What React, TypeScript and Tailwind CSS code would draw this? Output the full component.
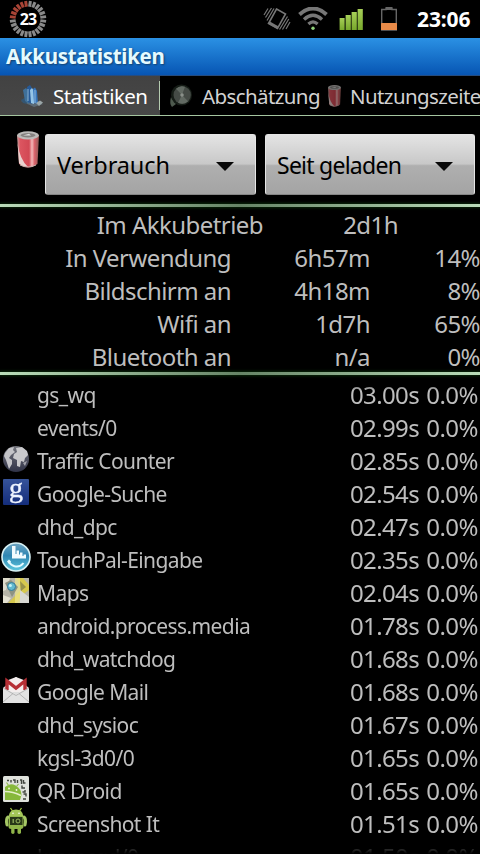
import clsx from 'clsx';

type IconName = 'globe' | 'search' | 'touchpal' | 'maps' | 'mail' | 'qr' | 'droid';

interface Process {
  name: string;
  time: string;
  icon?: IconName;
}

const SUMMARY = [
  { label: 'In Verwendung', value: '6h57m', share: '14%' },
  { label: 'Bildschirm an', value: '4h18m', share: '8%' },
  { label: 'Wifi an', value: '1d7h', share: '65%' },
  { label: 'Bluetooth an', value: 'n/a', share: '0%' },
];

const PROCESSES: Process[] = [
  { name: 'gs_wq', time: '03.00s' },
  { name: 'events/0', time: '02.99s' },
  { name: 'Traffic Counter', time: '02.85s', icon: 'globe' },
  { name: 'Google-Suche', time: '02.54s', icon: 'search' },
  { name: 'dhd_dpc', time: '02.47s' },
  { name: 'TouchPal-Eingabe', time: '02.35s', icon: 'touchpal' },
  { name: 'Maps', time: '02.04s', icon: 'maps' },
  { name: 'android.process.media', time: '01.78s' },
  { name: 'dhd_watchdog', time: '01.68s' },
  { name: 'Google Mail', time: '01.68s', icon: 'mail' },
  { name: 'dhd_sysioc', time: '01.67s' },
  { name: 'kgsl-3d0/0', time: '01.65s' },
  { name: 'QR Droid', time: '01.65s', icon: 'qr' },
  { name: 'Screenshot It', time: '01.51s', icon: 'droid' },
  { name: 'kmmcqd/0', time: '01.50s' },
];

function BatteryRing() {
  const ticks = Array.from({ length: 24 }, (_, i) => i);
  return (
    <div className="relative h-[38px] w-[38px]">
      <svg viewBox="0 0 38 38" className="h-[38px] w-[38px]">
        {ticks.map((i) => (
          <rect
            key={i}
            x="17.5"
            y="0.8"
            width="3"
            height="5.8"
            fill={i > 17 ? '#a84436' : '#8a8a8a'}
            transform={`rotate(${i * 15 + 7.5} 19 19)`}
          />
        ))}
      </svg>
      <span className="absolute inset-0 flex items-center justify-center text-[16px] font-bold tracking-[-0.8px] text-white">
        23
      </span>
    </div>
  );
}

function StatusBar() {
  return (
    <div className="flex h-[38px] shrink-0 items-center bg-black pl-[9px] pr-[9px]">
      <BatteryRing />
      <div className="ml-auto flex h-full items-start">
        {/* vibrate */}
        <svg viewBox="0 0 28 24" className="mt-[7px] h-6 w-7" fill="none" stroke="#777" strokeWidth="1.6">
          <path d="M13.5 2 22.5 7 14.5 21.5 5.5 16.5Z" />
          <path d="M5.8 15.5 14.6 20.5" strokeWidth="2.6" />
          <path d="M8.5 1 2.5 10.5M5 1.5 1 8M11 1.5 4 13.5M19.5 22.5 25.8 12M23 22 27 15M16.5 22.5 24.5 9.5" strokeWidth="1.2" />
        </svg>
        {/* wifi */}
        <svg viewBox="0 0 30 24" className="ml-[7px] mt-[7px] h-6 w-[30px]" fill="none" stroke="#777">
          <path d="M1.5 7.4Q15-4.4 28.5 7.4" strokeWidth="4" />
          <path d="M6 12.4Q15 4.2 24 12.4" strokeWidth="3.4" />
          <path d="M10.4 17Q15 12.8 19.6 17" strokeWidth="3.2" />
          <circle cx="15" cy="21.3" r="1.7" fill="#8fd07a" stroke="none" />
        </svg>
        {/* signal */}
        <svg viewBox="0 0 24 24" className="ml-[11px] mt-[7px] h-6 w-6">
          <defs>
            <linearGradient id="signal" x1="0" y1="0" x2="0" y2="1">
              <stop offset="0" stopColor="#a6cf57" />
              <stop offset="1" stopColor="#78a82c" />
            </linearGradient>
          </defs>
          <g fill="url(#signal)">
            <rect x="0.6" y="11" width="5" height="12" />
            <rect x="6.6" y="8" width="5.2" height="15" />
            <rect x="12.6" y="5" width="5.2" height="18" />
            <rect x="18.6" y="2" width="5.2" height="21" />
          </g>
        </svg>
        {/* battery */}
        <svg viewBox="0 0 18 26" className="ml-[17px] mt-[6px] h-[26px] w-[18px]">
          <path d="M6 2h6v1.5h4.3V24H1.7V3.5H6Z" fill="none" stroke="#666" strokeWidth="1.4" />
          <rect x="6" y="1" width="6" height="3" fill="#666" />
          <rect x="1" y="17" width="16" height="7" rx="0.6" fill="#e88a48" />
        </svg>
        <span className="ml-[19px] w-[54px] whitespace-nowrap text-[21px] font-bold leading-[39px] tracking-[-0.1px] text-white">
          23:06
        </span>
      </div>
    </div>
  );
}

function ChartIcon() {
  return (
    <svg viewBox="0 0 24 24" className="h-6 w-6 shrink-0">
      <path d="M1 17 11 14 23 20 14 23Z" fill="#5d6a74" />
      <path d="M1 16 6 13 7 20 3 19Z" fill="#345571" />
      <path d="M3 6 6 4 9 8V20L5 17Z" fill="#3f709a" />
      <path d="M7 3 10 1 12 4V20L8 18Z" fill="#265a98" />
      <path d="M10 6 12 4 14 7V20L11 19Z" fill="#95c5e7" />
      <path d="M13 5 15 3.5 17 7 18 20 14 19Z" fill="#3676bd" />
      <path d="M8 5V17M15 6V19" stroke="#a8cce2" strokeWidth="0.8" />
      <path d="M16 19 20 16.5 23 18.5 19 22Z" fill="#9ba6a8" />
    </svg>
  );
}

function DiscIcon() {
  return (
    <svg viewBox="0 0 24 24" className="h-6 w-6 shrink-0">
      <path d="M2 13Q0 20 3 23L7 20Z" fill="#4d594d" />
      <circle cx="12.5" cy="11" r="10.5" fill="#161d17" />
      <circle cx="13.2" cy="11" r="8.7" fill="#454b46" />
      <path d="M13 11 7 4.7A8.7 8.7 0 0 1 16 2.8ZM13 11 19 17.2A8.7 8.7 0 0 1 9 18.7Z" fill="#626a63" />
      <circle cx="13" cy="11" r="1.8" fill="#8a908a" />
    </svg>
  );
}

function CanIcon({ className }: { className: string }) {
  return (
    <svg viewBox="0 0 22 37" preserveAspectRatio="none" className={clsx('shrink-0', className)}>
      <defs>
        <linearGradient id="can">
          <stop offset="0" stopColor="#c9a5a1" />
          <stop offset="0.15" stopColor="#dc5560" />
          <stop offset="0.55" stopColor="#d24854" />
          <stop offset="0.68" stopColor="#f3b8b8" />
          <stop offset="0.8" stopColor="#d9626a" />
          <stop offset="1" stopColor="#8e5a56" />
        </linearGradient>
      </defs>
      <path d="M0 4Q11-2 22 4L20.5 33Q11 40 2 33Z" fill="url(#can)" />
      <path d="M0.6 12Q2.5 28 11 36L5 35 2 32Z" fill="#e9d2cf" />
      <ellipse cx="11" cy="4.4" rx="10.9" ry="4.2" fill="#bcbbb9" />
      <ellipse cx="11" cy="4.2" rx="7.5" ry="2.2" fill="#858280" />
      <path d="M6 4.6 12 2.8 14 4.6Z" fill="#ddd" />
      <path d="M3 34Q11 38 19 34" fill="none" stroke="#c5adaa" />
    </svg>
  );
}

function Tabs() {
  return (
    <div className="flex h-10 shrink-0 overflow-hidden border-b border-[#a5c5a0] bg-black text-[20.5px] leading-[39px] text-[#d2d2d2]">
      <div className="flex w-40 shrink-0 items-center bg-gradient-to-b from-[#424242] to-[#484848] pl-5 text-white">
        <ChartIcon />
        <span className="ml-[9px] whitespace-nowrap pt-[2px] tracking-[-0.55px]">Statistiken</span>
        <div className="ml-auto h-[29px] w-px bg-[#b5cbb0]" />
      </div>
      <div className="flex w-40 shrink-0 items-center pl-[9px]">
        <DiscIcon />
        <span className="ml-[9px] whitespace-nowrap pt-[2px] tracking-[-0.6px]">Abschätzung</span>
      </div>
      <div className="flex w-40 shrink-0 items-center pl-2">
        <CanIcon className="h-[22px] w-[13px] opacity-60" />
        <span className="ml-[9px] whitespace-nowrap pt-[2px] tracking-[-0.6px]">Nutzungszeite</span>
      </div>
    </div>
  );
}

function Spinner({ text, className }: { text: string; className: string }) {
  return (
    <button className="flex h-[61px] items-center rounded-[3px] border border-[#e6e6e6] border-b-[#858585] bg-[linear-gradient(#e4e4e4_0%,#c8c8c8_49%,#afafaf_52%,#a4a4a4_100%)] pl-[11px] pr-[21px] text-black">
      <span className={clsx('whitespace-nowrap pt-[2px]', className)}>{text}</span>
      <svg viewBox="0 0 18 9" className="ml-auto mt-[3px] h-[9px] w-[18px]">
        <path d="M0 0H18L9 9Z" fill="#080808" />
      </svg>
    </button>
  );
}

function Divider() {
  return (
    <div className="relative z-10 h-[3px] shrink-0 bg-[linear-gradient(90deg,#b9dcb8_0%,#668466_50%,#b9dcb8_100%)] shadow-[0_0_3px_1px_#092909]" />
  );
}

function AppIcon({ name }: { name: IconName }) {
  switch (name) {
    case 'globe':
      return (
        <svg viewBox="0 0 26 26" className="h-[26px] w-[26px]">
          <defs>
            <linearGradient id="globe" x1="0" y1="0" x2="0" y2="1">
              <stop offset="0" stopColor="#74757d" />
              <stop offset="1" stopColor="#303348" />
            </linearGradient>
          </defs>
          <circle cx="13" cy="13" r="13" fill="url(#globe)" />
          <path d="M2 7 6 2 11 1 10 4 12 6 8 9 6 12 9 14 9 18 6 23 4 17 3 14 1 10Z" fill="#c3c3c7" />
          <path d="M13 2 19 1 24 5 25 9 22 12 21 16 18 15 17 21 14 20 14 14 10 12 11 8 14 6Z" fill="#c9c9cc" />
          <path d="M20 17 24 15 22 20Z" fill="#a2a2aa" />
        </svg>
      );
    case 'search':
      return (
        <svg viewBox="0 0 26 26" className="h-[26px] w-[26px]">
          <defs>
            <linearGradient id="search" x1="0" y1="0" x2="0" y2="1">
              <stop offset="0" stopColor="#36539a" />
              <stop offset="1" stopColor="#142d7b" />
            </linearGradient>
          </defs>
          <rect width="26" height="26" rx="1" fill="url(#search)" />
          <text
            x="13"
            y="17.5"
            textAnchor="middle"
            fill="#eef4ff"
            stroke="#eef4ff"
            strokeWidth="0.4"
            className="font-['Liberation_Serif',serif] text-[28px]"
          >
            g
          </text>
        </svg>
      );
    case 'touchpal':
      return (
        <svg viewBox="0 0 30 30" className="-ml-0.5 h-[30px] w-[30px]">
          <defs>
            <linearGradient id="touchpal" x1="0" y1="0" x2="0" y2="1">
              <stop offset="0" stopColor="#6fa5c2" />
              <stop offset="0.45" stopColor="#2f86b2" />
              <stop offset="1" stopColor="#5ec9df" />
            </linearGradient>
          </defs>
          <circle cx="15" cy="15" r="14" fill="url(#touchpal)" stroke="#d8f1f4" strokeWidth="1.6" />
          <path d="M11 4H14.5V12H15.5V8.5H18V12.5H19V10.5H21.5V14H22.5V12.5H25V16.5H11Z" fill="#f3fcff" />
          <path d="M8 20Q10 23.5 13.5 24.2Q19 25.5 22.5 21" fill="none" stroke="#e4fbff" strokeWidth="2" />
          <path d="M6 19.5 8 17.5 10 19.5 8 22Z" fill="#e4fbff" />
        </svg>
      );
    case 'maps':
      return (
        <svg viewBox="0 0 26 25" className="h-[25px] w-[26px]">
          <rect width="26" height="25" fill="#b6b4a8" />
          <path d="M0 0H7L3 12 0 13Z" fill="#dedbcc" />
          <path d="M14 0H20L26 7V12L18 18 14 25H5L18 12Z" fill="#d6c84e" />
          <path d="M12 0H17V25H12Z" fill="#f0e78d" opacity="0.7" />
          <path d="M17 12 26 19V25H17Z" fill="#d8d8d3" />
          <path d="M0 17 8 20 4 25H0Z" fill="#e4e1d2" />
          <path d="M2 5 8 2 15 9 9 19Z" fill="#8d9282" />
          <path d="M17 3 23 9 18 13Z" fill="#98924a" />
          <circle cx="8.5" cy="8.5" r="4" fill="#63b9d0" stroke="#377d9a" />
          <circle cx="7.4" cy="7.4" r="1.5" fill="#c7f4f7" />
        </svg>
      );
    case 'mail':
      return (
        <svg viewBox="0 0 26 26" className="h-[26px] w-[26px]">
          <path d="M0 11 13 0 26 11V26H0Z" fill="#dedede" />
          <path d="M4 3.5 13 0 22 3.5V15H4Z" fill="#f4eeee" />
          <path d="M4 13V4L13 11 22 4V13" fill="none" stroke="#b62f35" strokeWidth="3.4" />
          <path d="M0 11 13 17 26 11V26H0Z" fill="#e3e3e3" />
          <path d="M0 25 10 16.5M26 25 16 16.5M0 11 13 18.5 26 11" fill="none" stroke="#aaa" strokeWidth="0.8" />
        </svg>
      );
    case 'qr':
      return (
        <svg viewBox="0 0 26 26" className="h-[26px] w-[26px]">
          <rect width="26" height="26" rx="1.5" fill="#dfe2dc" />
          <path d="M4 4.5H6M8 4V6.5M10 4H12V7M14.5 4V7M17 4H18.5V8M20.5 4V7H22.5M19 9.5V12H22M22 14V16H19.5M20.5 18H23V20.5M20 23H23" fill="none" stroke="#41453e" strokeWidth="1.4" />
          <path d="M2 24V11Q7 6.5 12.5 9.5Q18.5 13 18.5 19L17 24Z" fill="#87b83b" />
          <path d="M2 15.5Q10 15.5 18 19.5" fill="none" stroke="#e5efc9" strokeWidth="1.5" />
          <path d="M3.5 6.5 6 10M15.5 8 13.5 10.5" stroke="#91b952" strokeWidth="1.2" />
          <circle cx="6" cy="12.5" r="0.9" fill="#f2f5e5" />
          <circle cx="13.5" cy="14" r="0.9" fill="#f2f5e5" />
        </svg>
      );
    case 'droid':
      return (
        <svg viewBox="0 0 26 28" className="-mt-0.5 h-[28px] w-[26px]">
          <path d="M7.5 1 9.5 4M18.5 1 16.5 4" stroke="#a4c93f" strokeWidth="1.3" />
          <path d="M5.5 9.5Q6.5 2.5 13 2.5T20.5 9.5Z" fill="#a4c759" />
          <path d="M5.5 9H20.5V20Q20 22 18 22V26Q16.2 28 14.5 26V22H11.5V26Q10 28 8.2 26V22Q5.5 22 5.5 20Z" fill="#91b64a" />
          <path d="M5 10Q2.5 12 4 18M21 10Q23.5 12 22 18" fill="none" stroke="#a5c765" strokeWidth="3" strokeLinecap="round" />
          <circle cx="10" cy="6.2" r="0.8" fill="#fff" />
          <circle cx="16" cy="6.2" r="0.8" fill="#fff" />
          <rect x="7" y="10" width="12.5" height="8" fill="#283818" />
          <path d="M10.2 12V16" stroke="#9ab861" strokeWidth="1.2" />
          <circle cx="15" cy="14" r="2" fill="none" stroke="#9ab861" />
        </svg>
      );
  }
}

function ProcessRow({ process }: { process: Process }) {
  return (
    <div className="flex h-[33px] shrink-0 pl-[3px] pr-[2px] leading-[33px]">
      <div className={clsx('w-[34px]', process.icon === 'touchpal' ? 'pt-0' : 'pt-[3px]')}>
        {process.icon && <AppIcon name={process.icon} />}
      </div>
      <span className="whitespace-nowrap pt-[2px] text-[21px] tracking-[-0.6px]">{process.name}</span>
      <span className="ml-auto whitespace-nowrap pt-px text-[24px] tracking-[-0.65px]">{process.time}</span>
      <span className="w-[59px] whitespace-nowrap pt-px text-right text-[24px] tracking-[-0.5px]">0.0%</span>
    </div>
  );
}

export default function App() {
  return (
    <div className="flex h-[854px] w-[480px] flex-col overflow-hidden bg-black font-['Noto_Sans',sans-serif] text-[#bebebe]">
      <StatusBar />
      <div className="h-[38px] shrink-0 border-b border-[#254c80] bg-gradient-to-b from-[#2b91e4] to-[#0755b3] pl-[6px] text-[20.5px] font-bold leading-[37px] tracking-[-0.3px] text-[#e5faff] [text-shadow:1px_1px_2px_#12406d]">
        Akkustatistiken
      </div>
      <Tabs />
      <div className="flex h-[88px] shrink-0 pl-[17px] pr-[5px] pt-[15px]">
        <CanIcon className="h-[37px] w-[22px]" />
        <div className="ml-[6px] mt-[3px] grid grow grid-cols-[211px_210px] gap-[9px]">
          <Spinner text="Verbrauch" className="text-[23.5px] tracking-[-0.1px]" />
          <Spinner text="Seit geladen" className="text-[23px] tracking-[-0.75px]" />
        </div>
      </div>

      <Divider />
      <div className="h-[165px] shrink-0 text-[24px] leading-[35px] tracking-[-0.55px]">
        <div className="grid h-[33px] grid-cols-[263px_135px] text-right">
          <span>Im Akkubetrieb</span>
          <span>2d1h</span>
        </div>
        {SUMMARY.map((row) => (
          <div key={row.label} className="grid h-[33px] grid-cols-[231px_139px_110px] text-right">
            <span>{row.label}</span>
            <span>{row.value}</span>
            <span>{row.share}</span>
          </div>
        ))}
      </div>
      <Divider />

      {/* Process list fades out at both scroll edges */}
      <div className="flex min-h-0 flex-1 flex-col overflow-hidden pt-[2px] [mask-image:linear-gradient(transparent_0,black_16px,black_calc(100%_-_22px),transparent_100%)]">
        {PROCESSES.map((process) => (
          <ProcessRow key={process.name} process={process} />
        ))}
      </div>
    </div>
  );
}
